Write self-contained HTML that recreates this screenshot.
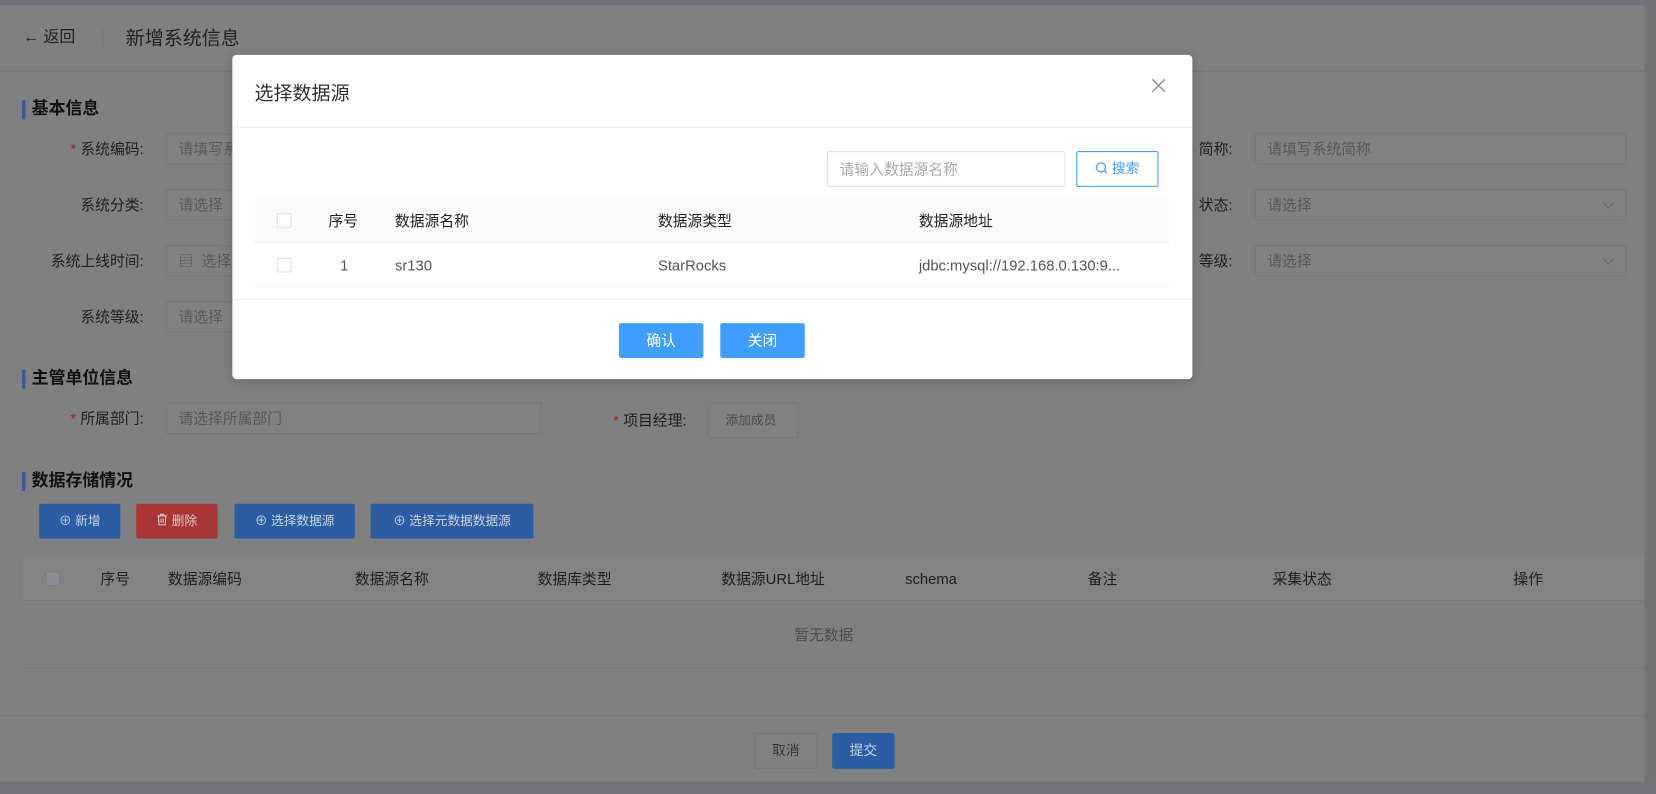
<!DOCTYPE html>
<html><head><meta charset="utf-8"><style>
*{box-sizing:border-box;margin:0;padding:0}
html,body{width:1656px;height:794px;overflow:hidden;background:#808080}
body{font-family:"Liberation Sans","Noto Sans CJK SC",sans-serif;color:#1f1f1f;font-size:14px}
#w{position:absolute;left:0;top:0;width:1568px;height:752px;transform:scale(1.05612);transform-origin:0 0;background:#808080}
.a{position:absolute;white-space:nowrap}
.lbl{position:absolute;text-align:right;width:130px;font-size:14px;color:#1e1e1e;line-height:30px}
.lbl i{color:#b02020;font-style:normal;margin-right:4px}
.inp{position:absolute;border:1px solid #767676;border-radius:2px;background:#818181;color:#585858;font-size:14px;padding-left:11px;line-height:28px;height:30px}
.sec{position:absolute;left:21px;border-left:3px solid #2c5a9c;padding-left:6px;font-weight:bold;font-size:16px;line-height:18px;color:#111}
.btn{position:absolute;height:33px;line-height:33px;color:#c6d3e6;font-size:12px;text-align:center;border-radius:2px;background:#2c5da3}
.th{position:absolute;font-size:14px;color:#1e1e1e;top:548px;transform:translateY(-50%)}
.mth{position:absolute;font-size:14px;color:#222;top:209px;transform:translateY(-50%)}
.mtd{position:absolute;font-size:14px;color:#555;top:251px;transform:translateY(-50%)}
.cb{position:absolute;width:14px;height:14px;border:1px solid #dcdfe6;border-radius:2px;background:#fff}
.arrow{position:absolute;right:12px;top:8px;width:8px;height:8px;border-right:1px solid #6a6a6a;border-bottom:1px solid #6a6a6a;transform:rotate(45deg)}
</style></head><body><div id="w">
<div class="a" style="left:0;top:0;width:1568px;height:5px;background:#6d7480"></div>
<div class="a" style="left:1557px;top:0;width:11px;height:752px;background:#717377"></div>
<div class="a" style="left:0;top:740px;width:1568px;height:12px;background:#717479"></div>
<div class="a" style="left:0;top:67px;width:1557px;height:1px;background:#747474"></div>
<div class="a" style="left:22px;top:26px;font-size:15px;line-height:20px">← 返回</div>
<div class="a" style="left:97px;top:27px;width:1px;height:17px;background:#767676"></div>
<div class="a" style="left:119px;top:24px;font-size:18px;line-height:24px;color:#222">新增系统信息</div>

<div class="sec" style="top:95px">基本信息</div>
<div class="lbl" style="left:6px;top:126px"><i>*</i>系统编码:</div>
<div class="inp" style="left:157px;top:126px;width:80px">请填写系</div>
<div class="lbl" style="left:6px;top:179px">系统分类:</div>
<div class="inp" style="left:157px;top:179px;width:80px">请选择</div>
<div class="lbl" style="left:6px;top:232px">系统上线时间:</div>
<div class="inp" style="left:157px;top:232px;width:80px">▤&nbsp; 选择</div>
<div class="lbl" style="left:6px;top:285px">系统等级:</div>
<div class="inp" style="left:157px;top:285px;width:80px">请选择</div>
<div class="lbl" style="left:1037px;top:126px">简称:</div>
<div class="inp" style="left:1188px;top:126px;width:352px">请填写系统简称</div>
<div class="lbl" style="left:1037px;top:179px">状态:</div>
<div class="inp" style="left:1188px;top:179px;width:352px">请选择<span class="arrow"></span></div>
<div class="lbl" style="left:1037px;top:232px">等级:</div>
<div class="inp" style="left:1188px;top:232px;width:352px">请选择<span class="arrow"></span></div>

<div class="sec" style="top:350px">主管单位信息</div>
<div class="lbl" style="left:6px;top:381px"><i>*</i>所属部门:</div>
<div class="inp" style="left:157px;top:381px;width:356px">请选择所属部门</div>
<div class="lbl" style="left:520px;top:383px"><i>*</i>项目经理:</div>
<div class="inp" style="left:670px;top:381px;width:86px;height:34px;line-height:32px;font-size:12px;padding-left:16px;color:#4a4a4a">添加成员</div>

<div class="sec" style="top:447px">数据存储情况</div>
<div class="btn" style="left:37px;top:477px;width:77px">⊕ 新增</div>
<div class="btn" style="left:129px;top:477px;width:77px;background:#a93535;color:#dcc"><svg width="11" height="12" viewBox="0 0 11 12" style="vertical-align:-1px"><path d="M1 2.5H10M4 2.5V1H7V2.5M2 2.5L2.6 11H8.4L9 2.5M4.5 5V9M6.5 5V9" fill="none" stroke="#dcc" stroke-width="1"/></svg> 删除</div>
<div class="btn" style="left:222px;top:477px;width:114px">⊕ 选择数据源</div>
<div class="btn" style="left:351px;top:477px;width:154px">⊕ 选择元数据数据源</div>
<div class="a" style="left:21px;top:528px;width:1536px;height:41px;background:#838383;border-bottom:1px solid #787878"></div>
<div class="a" style="left:43px;top:541px;width:14px;height:14px;background:#8a8d94;border:1px solid #7a7a7a;border-radius:2px"></div>
<div class="th" style="left:95px">序号</div>
<div class="th" style="left:159px">数据源编码</div>
<div class="th" style="left:336px">数据源名称</div>
<div class="th" style="left:509px">数据库类型</div>
<div class="th" style="left:683px">数据源URL地址</div>
<div class="th" style="left:857px">schema</div>
<div class="th" style="left:1030px">备注</div>
<div class="th" style="left:1205px">采集状态</div>
<div class="th" style="left:1433px">操作</div>
<div class="a" style="left:752px;top:591px;font-size:14px;color:#4c4c4c">暂无数据</div>
<div class="a" style="left:21px;top:632px;width:1536px;height:1px;background:#777"></div>
<div class="a" style="left:0;top:677px;width:1557px;height:1px;background:#777"></div>
<div class="inp" style="left:714px;top:694px;width:60px;height:34px;line-height:32px;padding:0;text-align:center;font-size:13px;color:#333">取消</div>
<div class="btn" style="left:788px;top:694px;width:59px;height:34px;line-height:34px;font-size:13px">提交</div>

<div class="a" style="left:220px;top:52px;width:909px;height:307px;background:#fff;border-radius:4px;box-shadow:0 2px 10px rgba(0,0,0,.2)">
  <div class="a" style="left:21px;top:24px;font-size:18px;line-height:24px;color:#303133">选择数据源</div>
  <svg class="a" style="left:870px;top:22px" width="14" height="14" viewBox="0 0 14 14"><path d="M1 1L13 13M13 1L1 13" stroke="#909399" stroke-width="1.4"/></svg>
  <div class="a" style="left:0;top:68px;width:909px;height:1px;background:#ebeef5"></div>
  <div class="a" style="left:563px;top:91px;width:226px;height:34px;border:1px solid #dcdfe6;border-radius:2px;color:#aaa;line-height:32px;padding-left:11px;font-size:14px">请输入数据源名称</div>
  <div class="a" style="left:799px;top:91px;width:78px;height:34px;border:1px solid #409eff;border-radius:2px;color:#409eff;line-height:32px;text-align:center;font-size:13px"><svg width="12" height="12" viewBox="0 0 12 12" style="vertical-align:-1px"><circle cx="5.5" cy="5.5" r="4.3" fill="none" stroke="#409eff" stroke-width="1.2"/><path d="M8.6 8.6L11 11" stroke="#409eff" stroke-width="1.2"/></svg> 搜索</div>
  <div class="a" style="left:21px;top:136px;width:866px;height:42px;background:#fafafa;border-bottom:1px solid #ebeef5"></div>
  <div class="a" style="left:21px;top:219px;width:866px;height:1px;background:#ebeef5"></div>
  <div class="a" style="left:0;top:231px;width:909px;height:1px;background:#ebeef5"></div>
</div>
<div class="cb" style="left:262px;top:202px"></div>
<div class="cb" style="left:262px;top:244px"></div>
<div class="mth" style="left:311px">序号</div>
<div class="mth" style="left:374px">数据源名称</div>
<div class="mth" style="left:623px">数据源类型</div>
<div class="mth" style="left:870px">数据源地址</div>
<div class="mtd" style="left:322px">1</div>
<div class="mtd" style="left:374px">sr130</div>
<div class="mtd" style="left:623px">StarRocks</div>
<div class="mtd" style="left:870px">jdbc:mysql://192.168.0.130:9...</div>
<div class="a" style="left:586px;top:306px;width:80px;height:33px;background:#409eff;color:#fff;border-radius:2px;text-align:center;line-height:33px;font-size:14px">确认</div>
<div class="a" style="left:682px;top:306px;width:80px;height:33px;background:#409eff;color:#fff;border-radius:2px;text-align:center;line-height:33px;font-size:14px">关闭</div>
</div></body></html>
